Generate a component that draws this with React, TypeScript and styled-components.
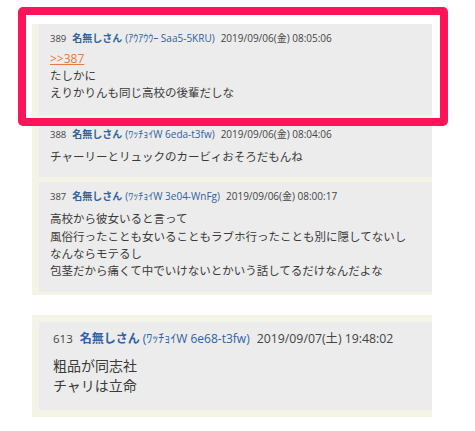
import React from "react";
import styled, { createGlobalStyle } from "styled-components";

const Global = createGlobalStyle`
  html, body { margin: 0; padding: 0; background: #ffffff; }
  body { font-family: "Open Sans", "Noto Sans CJK JP", sans-serif; }
`;

const Page = styled.div`
  position: relative;
  width: 475px;
  height: 431px;
  padding: 24px 0 0 32px;
  box-sizing: border-box;
  display: flex;
  flex-direction: column;
  gap: 20px;
`;

const Thread = styled.div<{ $big?: boolean }>`
  width: 400px;
  box-sizing: border-box;
  background: #f3f3e7;
  padding: ${(p) => (p.$big ? "7px 0 7px 7px" : "0 0 3px 7px")};
  display: flex;
  flex-direction: column;
  gap: 5px;
`;

const Post = styled.div<{ $big?: boolean; $tight?: boolean }>`
  background: #ececec;
  padding: ${(p) =>
    p.$big ? "8px 0 15px 14px" : p.$tight ? "7px 0 14px 11px" : "7px 0 12px 11px"};
  font-family: "Open Sans", "Noto Sans CJK JP", sans-serif;
`;

const Header = styled.div<{ $big?: boolean }>`
  display: flex;
  align-items: baseline;
  gap: ${(p) => (p.$big ? "7px" : "6px")};
  font-size: ${(p) => (p.$big ? "12px" : "10px")};
  line-height: ${(p) => (p.$big ? "16px" : "14px")};
  color: #444;
  margin-bottom: ${(p) => (p.$big ? "8px" : "6px")};
  white-space: nowrap;
`;

const Num = styled.span<{ $big?: boolean }>`
  font-size: ${(p) => (p.$big ? "11.5px" : "9.5px")};
  color: #444;
`;

const Name = styled.span<{ $big?: boolean }>`
  color: #2f62a0;
  font-weight: 700;
  font-family: "Noto Sans CJK JP", sans-serif;
  font-size: ${(p) => (p.$big ? "12px" : "10px")};
`;

const Id = styled.span<{ $big?: boolean }>`
  color: #2f62a0;
  font-size: ${(p) => (p.$big ? "12px" : "10px")};
  margin-left: 3px;
`;

const DateText = styled.span<{ $big?: boolean }>`
  color: #444;
  font-size: ${(p) => (p.$big ? "12.3px" : "10px")};
`;

const Body = styled.div<{ $big?: boolean }>`
  font-family: "Noto Sans CJK JP", sans-serif;
  font-size: ${(p) => (p.$big ? "14px" : "11.5px")};
  line-height: ${(p) => (p.$big ? "20px" : "17.3px")};
  color: #3a3a3a;
`;

const AnchorLine = styled.div`
  line-height: 15.5px;
  margin-top: -1px;
`;

const Anchor = styled.a`
  color: #e8783f;
  text-decoration: underline;
  font-family: "Open Sans", sans-serif;
  font-size: 12px;
`;

const Highlight = styled.div`
  position: absolute;
  left: 18px;
  top: 7px;
  width: 430px;
  height: 119px;
  box-sizing: border-box;
  border: 8px solid #ff1459;
  border-radius: 5px;
  pointer-events: none;
`;

type PostData = {
  num: string;
  id: string;
  date: string;
  anchor?: string;
  lines: string[];
};

const posts: PostData[] = [
  {
    num: "389",
    id: "(ｱｳｱｳｳｰ Saa5-5KRU)",
    date: "2019/09/06(金) 08:05:06",
    anchor: ">>387",
    lines: ["たしかに", "えりかりんも同じ高校の後輩だしな"],
  },
  {
    num: "388",
    id: "(ﾜｯﾁｮｲW 6eda-t3fw)",
    date: "2019/09/06(金) 08:04:06",
    lines: ["チャーリーとリュックのカービィおそろだもんね"],
  },
  {
    num: "387",
    id: "(ﾜｯﾁｮｲW 3e04-WnFg)",
    date: "2019/09/06(金) 08:00:17",
    lines: [
      "高校から彼女いると言って",
      "風俗行ったことも女いることもラブホ行ったことも別に隠してないし",
      "なんならモテるし",
      "包茎だから痛くて中でいけないとかいう話してるだけなんだよな",
    ],
  },
];

const last: PostData = {
  num: "613",
  id: "(ﾜｯﾁｮｲW 6e68-t3fw)",
  date: "2019/09/07(土) 19:48:02",
  lines: ["粗品が同志社", "チャリは立命"],
};

function PostView({ p, big }: { p: PostData; big?: boolean }) {
  return (
    <Post $big={big} $tight={!!p.anchor}>
      <Header $big={big}>
        <Num $big={big}>{p.num}</Num>
        <span>
          <Name $big={big}>名無しさん</Name>
          <Id $big={big}>{p.id}</Id>
        </span>
        <DateText $big={big}>{p.date}</DateText>
      </Header>
      <Body $big={big}>
        {p.anchor && (
          <AnchorLine>
            <Anchor href="#">{p.anchor}</Anchor>
          </AnchorLine>
        )}
        {p.lines.map((l, i) => (
          <div key={i}>{l}</div>
        ))}
      </Body>
    </Post>
  );
}

export default function App() {
  return (
    <>
      <Global />
      <Page>
        <Thread>
          {posts.map((p) => (
            <PostView key={p.num} p={p} />
          ))}
        </Thread>
        <Thread $big>
          <PostView p={last} big />
        </Thread>
        <Highlight />
      </Page>
    </>
  );
}
